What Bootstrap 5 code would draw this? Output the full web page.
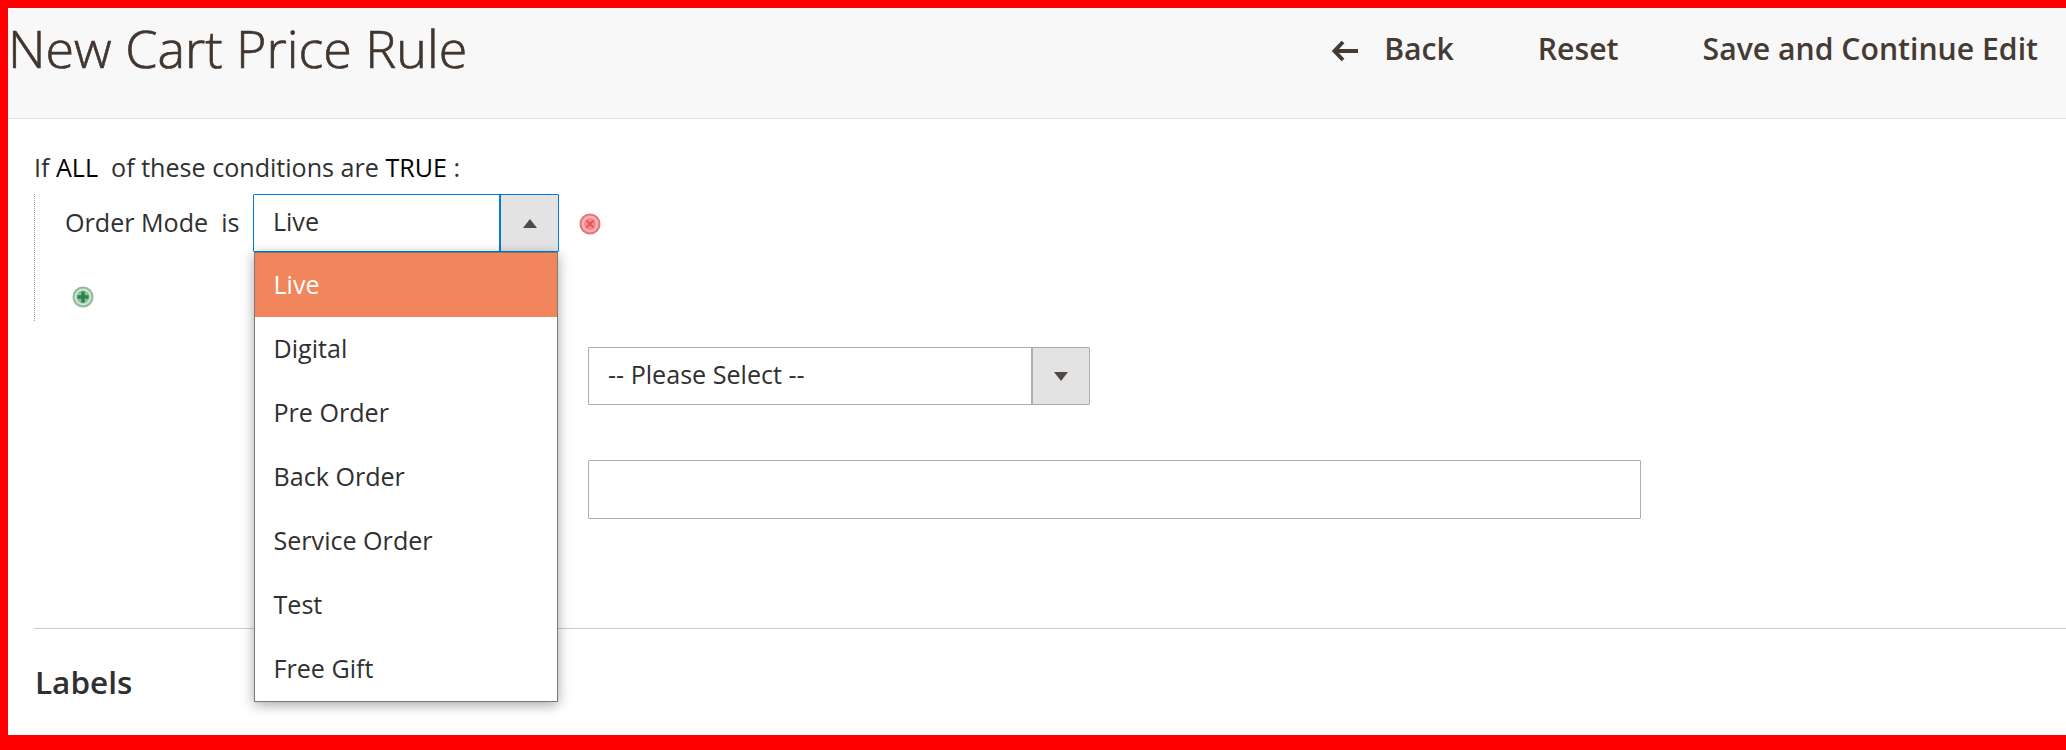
<!DOCTYPE html>
<html lang="en">
<head>
    <meta charset="UTF-8">
    <title>New Cart Price Rule</title>
    <link href="https://cdn.jsdelivr.net/npm/bootstrap@5.3.0/dist/css/bootstrap.min.css" rel="stylesheet">
    <style>
        body { margin: 0; background: #fff; font-family: "Open Sans", sans-serif; color: #303030; overflow: hidden; }
        .page-frame { height: 750px; border-style: solid; border-color: #f00; border-width: 8px 0 15px 8px; overflow: hidden; }
        .page-head { height: 111px; background: #f8f8f8; border-bottom: 1px solid #e3e3e3; }
        .page-title { margin: 0; padding-top: 8px; font-size: 52px; line-height: 64px; font-weight: 300; color: #41362f; -webkit-text-stroke: .7px #41362f; }
        .head-actions { padding: 21px 28px 0 0; gap: 84px; }
        .head-btn { padding: 0; border: 0; background: none; font-size: 30.200px; line-height: 40px; font-weight: 600; color: #463b34; }
        .back-arrow { width: 26px; height: 22px; margin-right: 26px; vertical-align: -2px; }
        .rule-body { padding: 38px 0 0 26px; position: relative; font-size: 25.100px; line-height: 28px; }
        .rule-title { line-height: 20px; height: 37px; }
        .rule-title b { font-weight: 400; color: #000; }
        .cond-list { height: 127px; border-left: 1px dotted #999; padding-left: 30px; }
        .cond-row { height: 58px; }
        .cond-name { padding-bottom: 2px; }
        .pick-box { display: flex; height: 58px; border: 1px solid #adadad; border-radius: 1px; background: #fff; line-height: 1; }
        .pick-box.is-open { border-color: #007bdb; width: 306px; margin: 0 20px 0 14px; }
        .pick-box.is-open .pick-text { width: 245px; padding-left: 18.500px; }
        .pick-box.is-open .pick-arrow { border-left: 2px solid #007bdb; width: 59px; }
        .pick-text { padding: 0 0 2px 19px; align-self: center; }
        .pick-arrow { background: #e3e3e3; border-left: 2px solid #adadad; display: flex; align-items: center; justify-content: center; }
        .tri-up { width: 0; height: 0; border: 7px solid transparent; border-top: 0; border-bottom: 9px solid #514943; }
        .tri-down { width: 0; height: 0; border: 7px solid transparent; border-bottom: 0; border-top: 9px solid #514943; }
        .del-icon { margin-top: 2px; }
        .add-icon { display: block; margin: 34px 0 0 7px; }
        .field-wrap { padding-left: 554px; }
        .pick-wide { width: 502px; margin-top: 26px; }
        .pick-wide .pick-text { width: 442px; }
        .pick-wide .pick-arrow { width: 58px; }
        .text-box { display: block; width: 1053px; height: 59px; margin-top: 55px; border: 1px solid #adadad; border-radius: 1px; }
        .split-line { margin: 109px 0 0; border: 0; border-top: 1px solid #ccc; opacity: 1; }
        .labels-title { margin: 38px 0 0 1px; font-size: 31.500px; line-height: 30px; font-weight: 600; color: #303030; }
        .mode-menu { display: block; left: 246px; top: 133px; width: 304px; margin: 0; padding: 0; border: 1px solid #7a7a7a; border-radius: 0; box-shadow: 0 3px 12px rgba(0,0,0,.35); }
        .mode-menu .dropdown-item { height: 64px; padding: 0 18.500px; line-height: 63px; font-size: 25.100px; color: #303030; }
        .mode-menu .dropdown-item.active { background: #f1855b; color: #fff; }
    </style>
</head>
<body>
    <div class="page-frame">
        <div class="page-head d-flex justify-content-between">
            <h1 class="page-title">New Cart Price Rule</h1>
            <div class="head-actions d-flex align-items-start">
                <button class="head-btn" type="button">
                    <svg class="back-arrow" viewBox="0 0 26 22"><path d="M11 2 2.500 11 11 20M3 11H26" fill="none" stroke="#463b34" stroke-width="4"/></svg>Back
                </button>
                <button class="head-btn" type="button">Reset</button>
                <button class="head-btn" type="button">Save and Continue Edit</button>
            </div>
        </div>

        <div class="rule-body">
            <div class="rule-title">If <b>ALL</b>&nbsp; of these conditions are <b>TRUE</b> :</div>
            <div class="cond-list">
                <div class="cond-row d-flex align-items-center">
                    <span class="cond-name">Order Mode&nbsp; is</span>
                    <div class="pick-box is-open">
                        <span class="pick-text">Live</span>
                        <span class="pick-arrow"><span class="tri-up"></span></span>
                    </div>
                    <svg class="del-icon" width="22" height="22" viewBox="0 0 22 22">
                        <circle cx="11" cy="11" r="10.500" fill="#e87474"/>
                        <circle cx="11" cy="11" r="8.500" fill="#f7b0b0"/>
                        <circle cx="11" cy="11" r="6" fill="#f08a8a"/>
                        <path d="M7.500 7.500 14.500 14.500M14.500 7.500 7.500 14.500" stroke="#e54c4c" stroke-width="1.600"/>
                    </svg>
                </div>
                <svg class="add-icon" width="22" height="22" viewBox="0 0 22 22">
                    <circle cx="11" cy="11" r="10.500" fill="#8dbb98"/>
                    <circle cx="11" cy="11" r="8.500" fill="#cfe6d3"/>
                    <circle cx="11" cy="11" r="6.500" fill="#8cc09a"/>
                    <path d="M11 5.500V16.500M5.500 11H16.500" stroke="#2d8449" stroke-width="3.500"/>
                </svg>
            </div>

            <div class="field-wrap">
                <div class="pick-box pick-wide">
                    <span class="pick-text">-- Please Select --</span>
                    <span class="pick-arrow"><span class="tri-down"></span></span>
                </div>
                <div class="text-box"></div>
            </div>

            <hr class="split-line">
            <h2 class="labels-title">Labels</h2>

            <ul class="dropdown-menu show mode-menu list-unstyled">
                <li><a class="dropdown-item active" href="#">Live</a></li>
                <li><a class="dropdown-item" href="#">Digital</a></li>
                <li><a class="dropdown-item" href="#">Pre Order</a></li>
                <li><a class="dropdown-item" href="#">Back Order</a></li>
                <li><a class="dropdown-item" href="#">Service Order</a></li>
                <li><a class="dropdown-item" href="#">Test</a></li>
                <li><a class="dropdown-item" href="#">Free Gift</a></li>
            </ul>
        </div>
    </div>
    <script src="https://cdn.jsdelivr.net/npm/bootstrap@5.3.0/dist/js/bootstrap.bundle.min.js"></script>
</body>
</html>
